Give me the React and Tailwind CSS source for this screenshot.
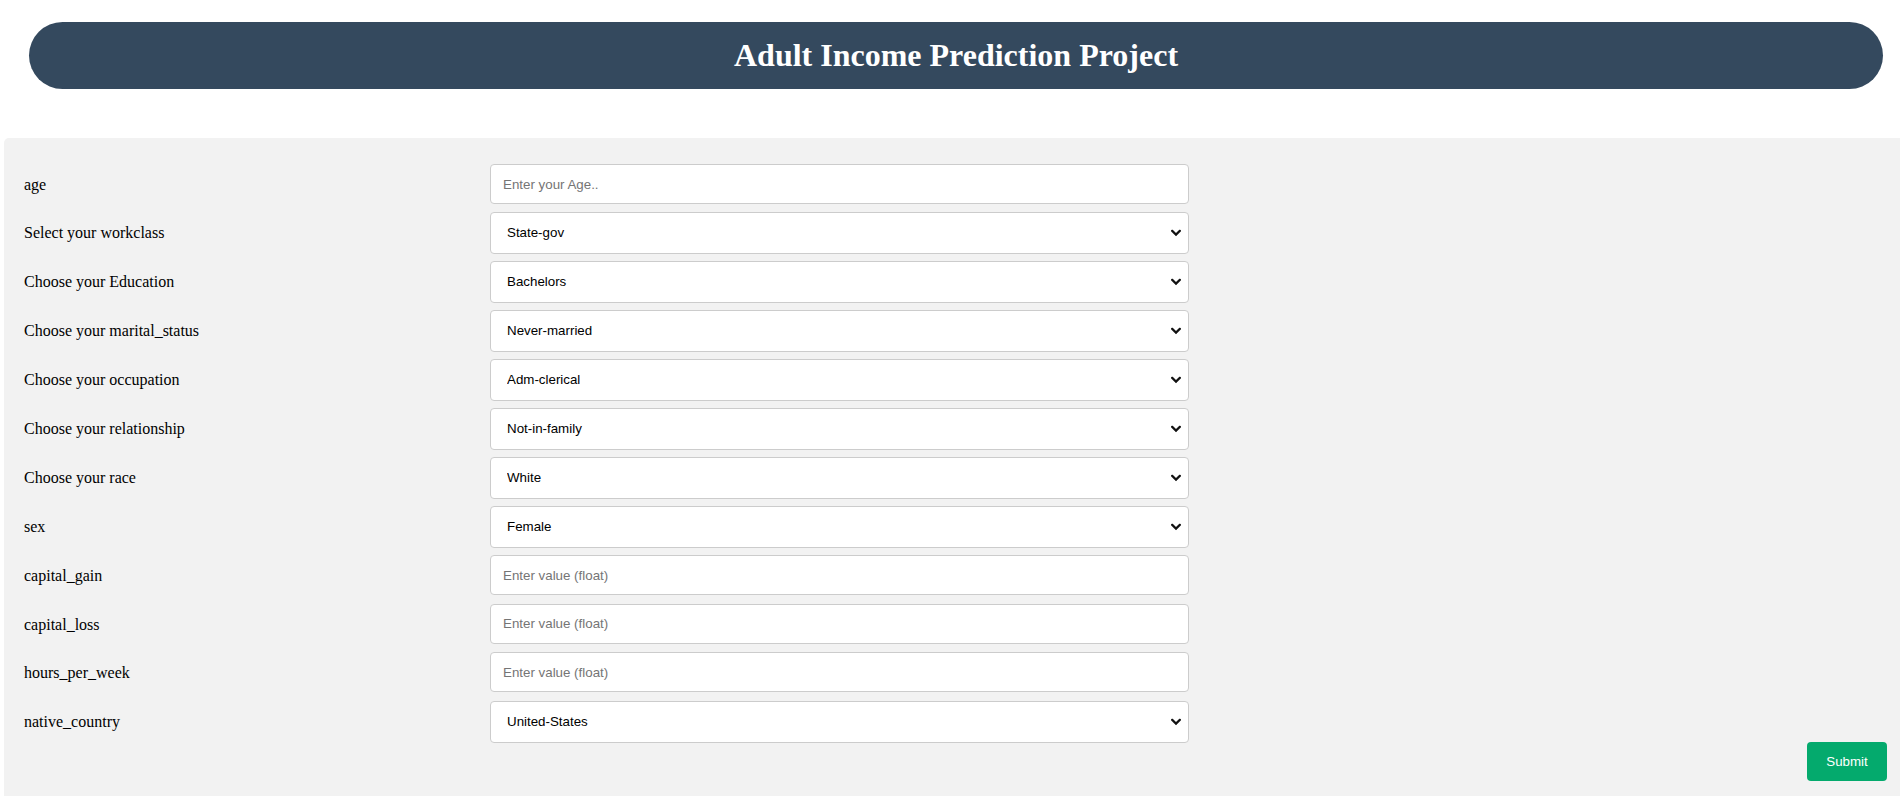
import React from "react";

const rows = [
  { label: "age", type: "input", placeholder: "Enter your Age.." },
  { label: "Select your workclass", type: "select", value: "State-gov", options: ["State-gov", "Self-emp-not-inc", "Private", "Federal-gov", "Local-gov", "Self-emp-inc", "Without-pay"] },
  { label: "Choose your Education", type: "select", value: "Bachelors", options: ["Bachelors", "HS-grad", "11th", "Masters", "9th", "Some-college", "Assoc-acdm", "Doctorate"] },
  { label: "Choose your marital_status", type: "select", value: "Never-married", options: ["Never-married", "Married-civ-spouse", "Divorced", "Separated", "Widowed"] },
  { label: "Choose your occupation", type: "select", value: "Adm-clerical", options: ["Adm-clerical", "Exec-managerial", "Handlers-cleaners", "Prof-specialty", "Other-service", "Sales"] },
  { label: "Choose your relationship", type: "select", value: "Not-in-family", options: ["Not-in-family", "Husband", "Wife", "Own-child", "Unmarried", "Other-relative"] },
  { label: "Choose your race", type: "select", value: "White", options: ["White", "Black", "Asian-Pac-Islander", "Amer-Indian-Eskimo", "Other"] },
  { label: "sex", type: "select", value: "Female", options: ["Female", "Male"] },
  { label: "capital_gain", type: "input", placeholder: "Enter value (float)" },
  { label: "capital_loss", type: "input", placeholder: "Enter value (float)" },
  { label: "hours_per_week", type: "input", placeholder: "Enter value (float)" },
  { label: "native_country", type: "select", value: "United-States", options: ["United-States", "Cuba", "Jamaica", "India", "Mexico", "Canada"] },
];

function Chevron() {
  return (
    <svg
      className="pointer-events-none absolute right-[8px] top-1/2 -translate-y-1/2"
      width="10"
      height="7"
      viewBox="0 0 10 7"
      fill="none"
    >
      <path d="M1.2 1.4 L5 5.1 L8.8 1.4" stroke="#111" strokeWidth="2.2" strokeLinecap="square" />
    </svg>
  );
}

export default function App() {
  return (
    <div className="min-h-[796px] overflow-hidden bg-white font-['Liberation_Serif','Times_New_Roman',serif] text-[16px] text-black">
      <div className="ml-[29px] mr-[17px] mt-[22px] flex h-[67px] items-center justify-center rounded-full bg-[#34495e]">
        <h1 className="text-[32px] font-bold leading-[36.8px] text-white">Adult Income Prediction Project</h1>
      </div>

      <div className="ml-[4px] mt-[49px] rounded-tl-[5px] bg-[#f2f2f2] pb-5 pl-5 pr-[13px] pt-5">
        <form onSubmit={(e) => e.preventDefault()}>
          {rows.map((r) => (
            <div key={r.label} className="flex items-start">
              <div className="mt-[6px] w-[466px] shrink-0">
                <label className="inline-block py-3 pr-3 leading-[18.4px]">{r.label}</label>
              </div>
              <div className="mt-[6px]">
                {r.type === "input" ? (
                  <input
                    type="text"
                    placeholder={r.placeholder}
                    className="box-border block h-[40px] w-[699px] rounded-[4px] border border-[#cccccc] bg-white px-3 font-['Liberation_Sans',Arial,sans-serif] text-[13.333px] text-black placeholder:text-[#757575] outline-none"
                  />
                ) : (
                  <div className="relative mb-[1px] w-[699px]">
                    <select
                      defaultValue={r.value}
                      className="box-border block h-[42px] w-[699px] appearance-none rounded-[4px] border border-[#cccccc] bg-white pl-[16px] pr-8 font-['Liberation_Sans',Arial,sans-serif] text-[13.333px] text-black outline-none"
                    >
                      {r.options.map((o) => (
                        <option key={o} value={o}>
                          {o}
                        </option>
                      ))}
                    </select>
                    <Chevron />
                  </div>
                )}
              </div>
            </div>
          ))}
          <div className="flex justify-end">
            <button
              type="submit"
              className="mt-[-2px] h-[39px] w-[80px] rounded-[4px] bg-[#04aa6d] font-['Liberation_Sans',Arial,sans-serif] text-[13.333px] leading-[15px] text-white"
            >
              Submit
            </button>
          </div>
        </form>
      </div>
    </div>
  );
}
